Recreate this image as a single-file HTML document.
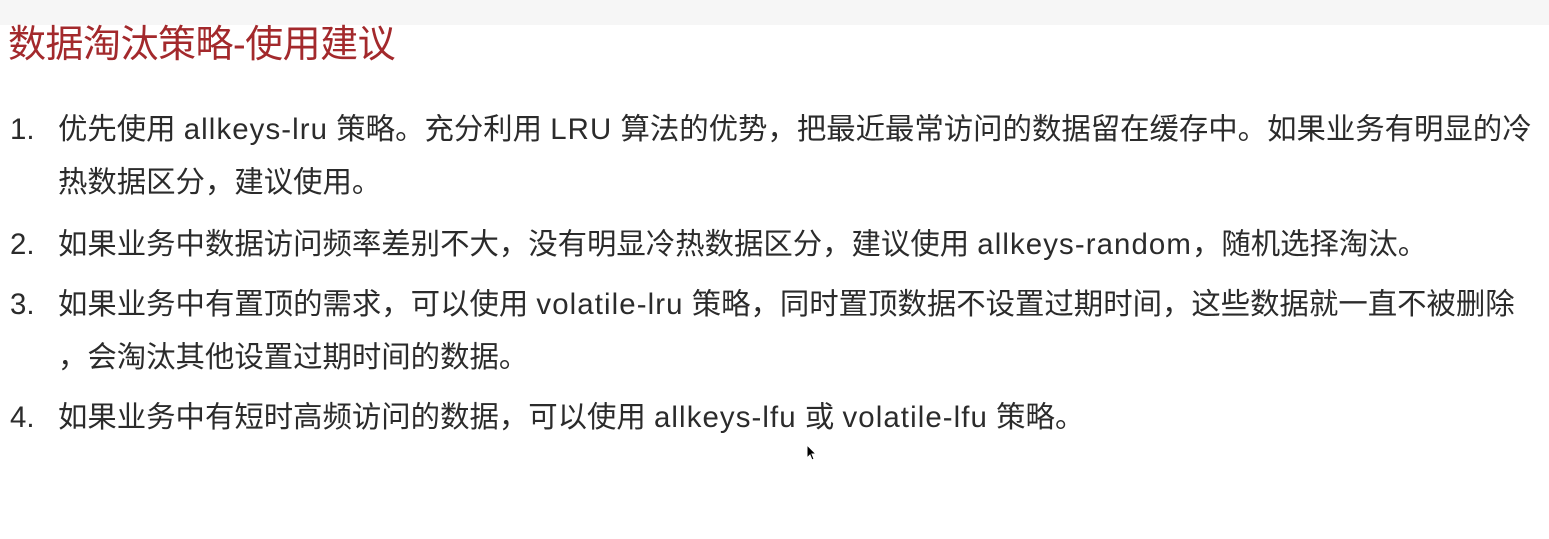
<!DOCTYPE html>
<html><head><meta charset="utf-8"><style>
html,body{margin:0;padding:0;background:#fff;width:1549px;height:539px;overflow:hidden}
body{font-family:"Liberation Sans","Noto Sans CJK SC",sans-serif;color:#2b2b2b;position:relative}
.top{position:absolute;left:0;top:0;width:1549px;height:25px;background:#f6f6f6}
h1{position:absolute;left:8px;top:13px;margin:0;font-weight:normal;font-size:38px;color:#a3292c;white-space:nowrap;letter-spacing:-0.5px}
.l{position:absolute;white-space:nowrap;font-size:29.4px;line-height:34px}
.n{left:10px}
.t{left:58px}
i{font-style:normal;letter-spacing:1.1px}
</style></head><body>
<div class="top"></div>
<h1>数据淘汰策略-使用建议</h1>
<div class="l n" style="top:113px">1.</div>
<div class="l t" style="top:113px">优先使用 <i>allkeys-lru</i> 策略。充分利用 <i>LRU</i> 算法的优势，把最近最常访问的数据留在缓存中。如果业务有明显的冷</div>
<div class="l t" style="top:166px">热数据区分，建议使用。</div>
<div class="l n" style="top:228px">2.</div>
<div class="l t" style="top:228px">如果业务中数据访问频率差别不大，没有明显冷热数据区分，建议使用 <i>allkeys-random</i>，随机选择淘汰。</div>
<div class="l n" style="top:288px">3.</div>
<div class="l t" style="top:288px">如果业务中有置顶的需求，可以使用 <i>volatile-lru</i> 策略，同时置顶数据不设置过期时间，这些数据就一直不被删除</div>
<div class="l t" style="top:341px">，会淘汰其他设置过期时间的数据。</div>
<div class="l n" style="top:401px">4.</div>
<div class="l t" style="top:401px">如果业务中有短时高频访问的数据，可以使用 <i>allkeys-lfu</i> 或 <i>volatile-lfu</i> 策略。</div>
<svg style="position:absolute;left:806px;top:444px" width="12" height="18" viewBox="0 0 12 18"><path d="M1 1 L1 14 L4 11 L6 16 L8 15 L6 10 L10 10 Z" fill="#000" stroke="#fff" stroke-width="1"/></svg>
</body></html>
